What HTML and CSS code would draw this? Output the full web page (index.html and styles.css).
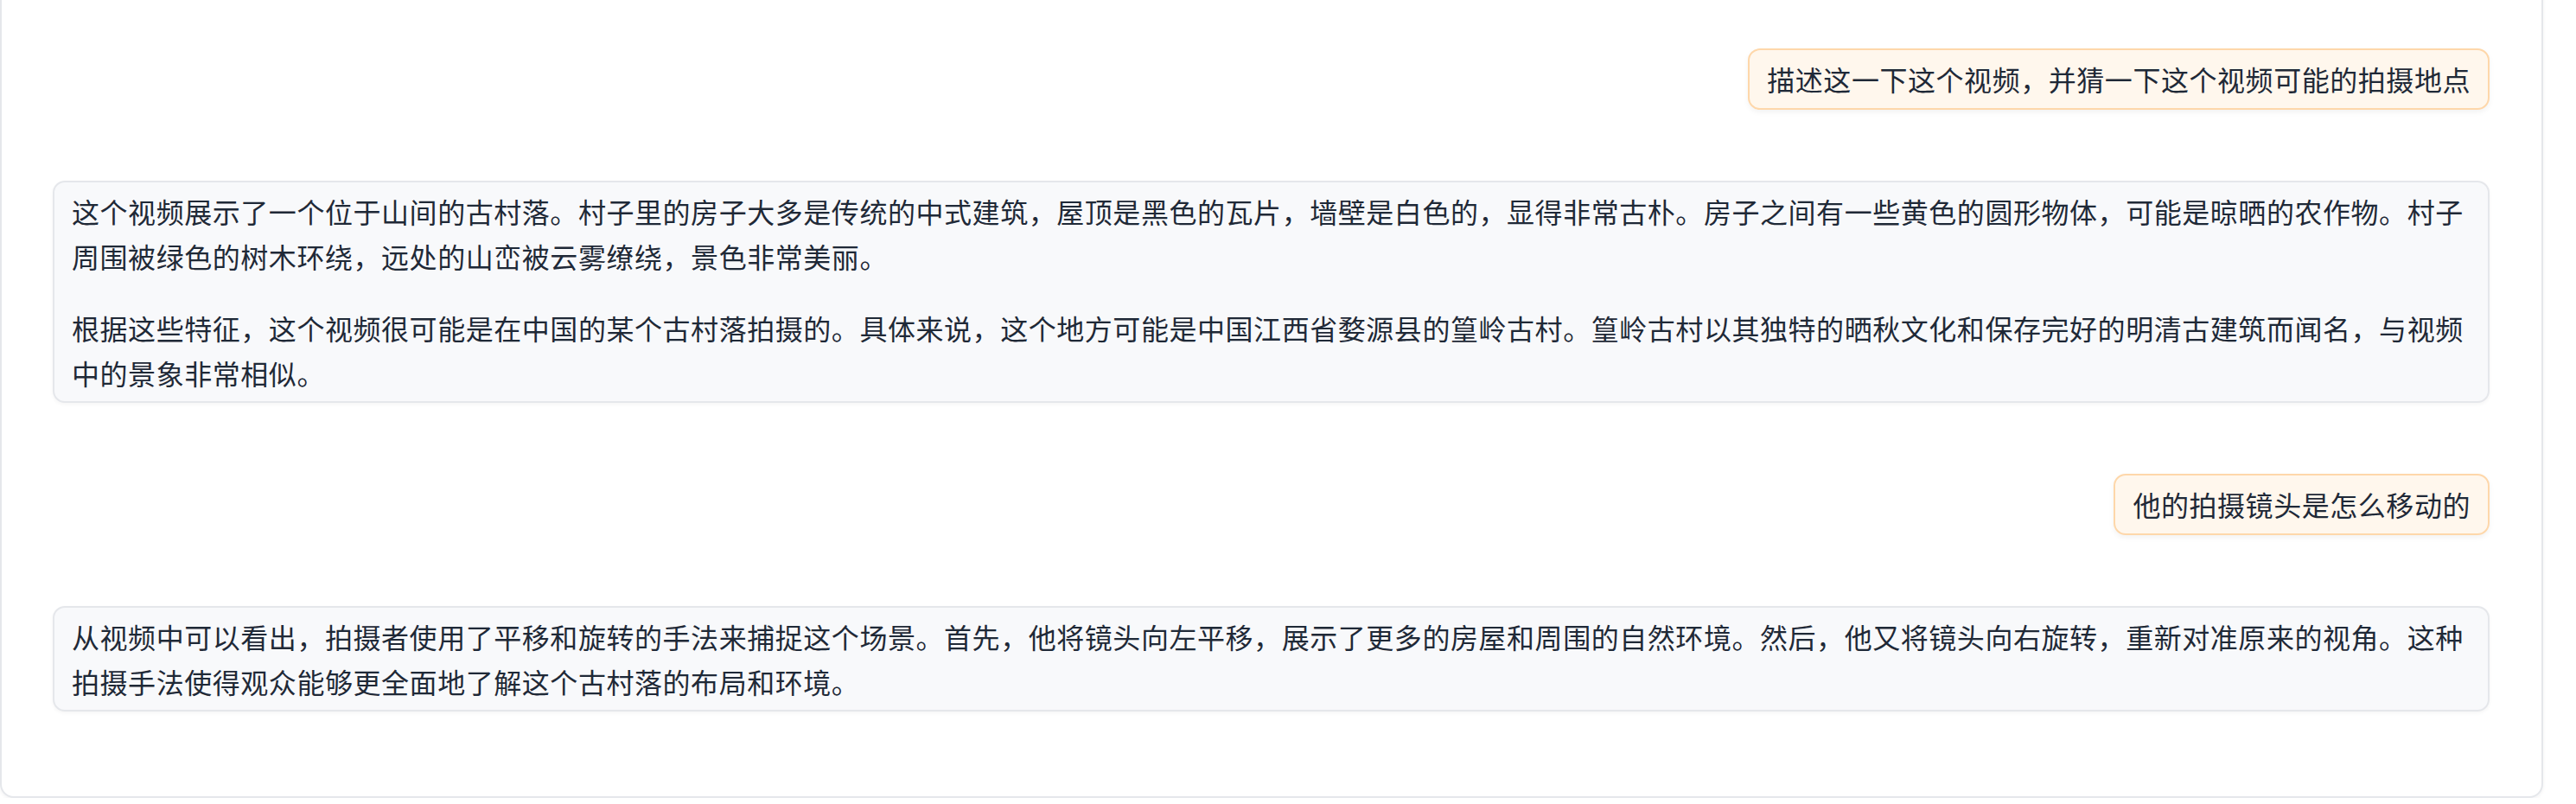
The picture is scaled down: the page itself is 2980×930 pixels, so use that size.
FILE: index.html
```html
<!DOCTYPE html>
<html lang="zh-CN">
<head>
<meta charset="utf-8">
<title>Chat</title>
<link rel="stylesheet" href="styles.css">
</head>
<body>
<div class="card">
  <div class="messages">
    <div class="row row-user">
      <div class="bubble bubble-user">描述这一下这个视频，并猜一下这个视频可能的拍摄地点</div>
    </div>
    <div class="row">
      <div class="bubble bubble-bot">
        <p>这个视频展示了一个位于山间的古村落。村子里的房子大多是传统的中式建筑，屋顶是黑色的瓦片，墙壁是白色的，显得非常古朴。房子之间有一些黄色的圆形物体，可能是晾晒的农作物。村子周围被绿色的树木环绕，远处的山峦被云雾缭绕，景色非常美丽。</p>
        <p>根据这些特征，这个视频很可能是在中国的某个古村落拍摄的。具体来说，这个地方可能是中国江西省婺源县的篁岭古村。篁岭古村以其独特的晒秋文化和保存完好的明清古建筑而闻名，与视频中的景象非常相似。</p>
      </div>
    </div>
    <div class="row row-user">
      <div class="bubble bubble-user">他的拍摄镜头是怎么移动的</div>
    </div>
    <div class="row">
      <div class="bubble bubble-bot">
        <p>从视频中可以看出，拍摄者使用了平移和旋转的手法来捕捉这个场景。首先，他将镜头向左平移，展示了更多的房屋和周围的自然环境。然后，他又将镜头向右旋转，重新对准原来的视角。这种拍摄手法使得观众能够更全面地了解这个古村落的布局和环境。</p>
      </div>
    </div>
  </div>
</div>
</body>
</html>
```
FILE: styles.css
```css
html, body {
  margin: 0;
  padding: 0;
  background: #ffffff;
  overflow: hidden;
}

body {
  font-family: "Noto Sans CJK SC", "Noto Sans", sans-serif;
  color: #1f2937;
}

.card {
  margin: -20px 38px 0 0;
  border: 2px solid #e5e7eb;
  border-radius: 16px;
  background: #ffffff;
  box-shadow: 0 2px 4px rgba(15, 23, 42, 0.05);
  padding: 74px 60px 98px 59px;
}

.messages {
  display: flex;
  flex-direction: column;
  gap: 82px;
}

.row {
  display: flex;
}

.row-user {
  justify-content: flex-end;
}

.bubble {
  font-size: 32px;
  line-height: 52px;
  letter-spacing: 0.55px;
  padding: 7px 20px;
  border-radius: 14px;
}

.bubble-user {
  padding-bottom: 8px;
  background: #fff7ed;
  border: 2px solid #fed7aa;
  box-shadow: 0 3px 6px rgba(0, 0, 0, 0.05);
}

.bubble-bot {
  flex: 1;
  background: #f8f9fb;
  border: 2px solid #e5e7eb;
  box-shadow: 0 2px 4px rgba(0, 0, 0, 0.04);
}

.bubble-bot p {
  margin: 0 0 31px 0;
}

.bubble-bot p:last-child {
  margin-bottom: 0;
}
```
